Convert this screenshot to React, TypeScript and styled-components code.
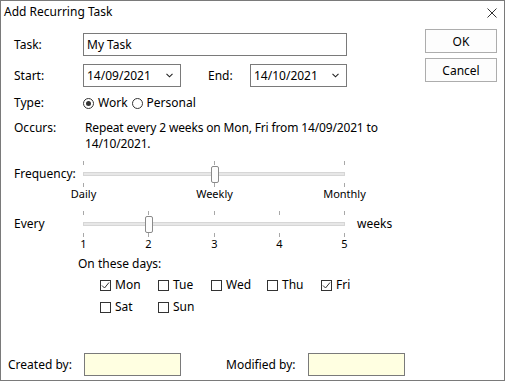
import * as React from 'react';
import styled, {createGlobalStyle} from 'styled-components';

const GlobalStyle = createGlobalStyle`
	html, body {
		margin: 0;
		padding: 0;
		background: #fff;
	}
	body {
		font-family: "Noto Sans", "Open Sans", sans-serif;
		font-size: 12px;
		color: #000;
	}
`;

const TRACK_WIDTH = 262;

const Window = styled.div`
	box-sizing: border-box;
	width: 505px;
	height: 381px;
	border: 1px solid #7a7a7a;
	display: flex;
	flex-direction: column;
	background: #fff;
`;
const TitleBar = styled.div`
	height: 21px;
	display: flex;
	align-items: center;
	justify-content: space-between;
	padding: 0 7px 0 3px;
	font-size: 12px;
`;
const CloseIcon = styled.svg`
	display: block;
	margin-top: 2px;
`;
const Content = styled.div`
	flex: 1;
	display: flex;
`;
const Main = styled.div`
	flex: 1;
	display: flex;
	flex-direction: column;
	padding-left: 13px;
`;
const Row = styled.div<{$top: number; $height?: number}>`
	display: flex;
	align-items: center;
	margin-top: ${p => p.$top}px;
	height: ${p => (p.$height ? `${p.$height}px` : 'auto')};
`;
const TopRow = styled(Row)`
	align-items: flex-start;
`;
const Label = styled.span<{$width: number}>`
	flex: none;
	width: ${p => p.$width}px;
	line-height: 16px;
	white-space: nowrap;
`;
const TextBox = styled.div<{$width: number; $yellow?: boolean}>`
	box-sizing: border-box;
	width: ${p => p.$width}px;
	height: 23px;
	border: 1px solid #7a7a7a;
	background: ${p => (p.$yellow ? '#ffffe1' : '#fff')};
	display: flex;
	align-items: center;
	padding-left: 3px;
	font-size: 12px;
`;
const Select = styled(TextBox)`
	justify-content: space-between;
	padding-right: 7px;
`;
const RadioGroup = styled.div`
	display: flex;
	align-items: center;
	gap: 4px;
`;
const Choice = styled.label`
	display: flex;
	align-items: center;
	gap: 4px;
	line-height: 16px;
`;
const RadioCircle = styled.span<{$checked?: boolean}>`
	box-sizing: border-box;
	width: 11px;
	height: 11px;
	border-radius: 50%;
	border: 1px solid #333;
	display: flex;
	align-items: center;
	justify-content: center;
	&::after {
		content: '';
		width: 5px;
		height: 5px;
		border-radius: 50%;
		background: ${p => (p.$checked ? '#333' : 'transparent')};
	}
`;
const OccursText = styled.div`
	width: 300px;
	line-height: 16px;
	padding-left: 2px;
	letter-spacing: -0.15px;
`;
const SliderBox = styled.div`
	display: flex;
	flex-direction: column;
	width: ${TRACK_WIDTH}px;
`;
const TrackArea = styled.div`
	position: relative;
	height: 26px;
`;
const Groove = styled.div`
	position: absolute;
	left: 0;
	right: 0;
	top: 11px;
	height: 4px;
	box-sizing: border-box;
	background: #e7e7e7;
	border: 1px solid #d6d6d6;
`;
const Tick = styled.div<{$bottom?: boolean}>`
	position: absolute;
	width: 1px;
	height: 4px;
	background: #a8a8a8;
	top: ${p => (p.$bottom ? '22px' : '0')};
`;
const Thumb = styled.div`
	position: absolute;
	top: 5px;
	width: 8px;
	height: 17px;
	box-sizing: border-box;
	margin-left: -4px;
	border: 1px solid #8a8a8a;
	border-radius: 2px;
	background: #fdfdfd;
`;
const TickLabels = styled.div`
	position: relative;
	height: 14px;
	line-height: 14px;
	font-size: 11px;
`;
const TickLabel = styled.span`
	position: absolute;
	top: 0;
	transform: translateX(-50%);
	white-space: nowrap;
`;
const SliderRow = styled.div<{$top: number}>`
	display: flex;
	align-items: flex-start;
	margin-top: ${p => p.$top}px;
`;
const SliderSide = styled.span<{$width: number; $pad?: number}>`
	flex: none;
	width: ${p => p.$width}px;
	padding-left: ${p => p.$pad || 0}px;
	height: 26px;
	line-height: 26px;
`;
const DaysTitle = styled.div`
	margin-top: 6px;
	padding-left: 64px;
	line-height: 14px;
`;
const DaysGrid = styled.div`
	display: grid;
	grid-template-columns: 58px 53px 56px 54px 60px;
	grid-auto-rows: 14px;
	row-gap: 8px;
	margin-top: 7px;
	padding-left: 86px;
`;
const CheckLabel = styled.label`
	display: flex;
	align-items: center;
	gap: 4px;
	height: 14px;
	line-height: 14px;
`;
const CheckBox = styled.span`
	box-sizing: border-box;
	width: 11px;
	height: 11px;
	border: 1px solid #333;
	background: #fff;
	display: flex;
	align-items: center;
	justify-content: center;
`;
const Buttons = styled.div`
	width: 72px;
	margin: 7px 7px 0 0;
	display: flex;
	flex-direction: column;
	gap: 5px;
`;
const Button = styled.div`
	box-sizing: border-box;
	height: 24px;
	border: 1px solid #adadad;
	background: #fdfdfd;
	display: flex;
	align-items: center;
	justify-content: center;
`;
const Footer = styled.div`
	display: flex;
	align-items: center;
	height: 23px;
	padding-left: 7px;
	margin-bottom: 4px;
`;

const Chevron = () => (
	<svg width="7" height="5" viewBox="0 0 7 5">
		<polyline points="0.5,0.8 3.5,3.8 6.5,0.8" fill="none" stroke="#222" strokeWidth="1.1" />
	</svg>
);

const Radio: React.FC<{label: string; checked?: boolean}> = ({label, checked}) => (
	<Choice>
		<RadioCircle $checked={checked} />
		{label}
	</Choice>
);

const Check: React.FC<{label: string; checked?: boolean}> = ({label, checked}) => (
	<CheckLabel>
		<CheckBox>
			{checked && (
				<svg width="9" height="9" viewBox="0 0 9 9">
					<polyline points="1,4.5 3.5,7 8,1.5" fill="none" stroke="#333" strokeWidth="1" />
				</svg>
			)}
		</CheckBox>
		{label}
	</CheckLabel>
);

const Slider: React.FC<{labels: string[]; value: number}> = ({labels, value}) => {
	const step = (TRACK_WIDTH - 1) / (labels.length - 1);
	return (
		<SliderBox>
			<TrackArea>
				<Groove />
				{labels.map((l, i) => (
					<React.Fragment key={l}>
						<Tick style={{left: Math.round(i * step)}} />
						<Tick $bottom style={{left: Math.round(i * step)}} />
					</React.Fragment>
				))}
				<Thumb style={{left: Math.round(value * step) + 0.5}} />
			</TrackArea>
			<TickLabels>
				{labels.map((l, i) => (
					<TickLabel key={l} style={{left: Math.round(i * step) + 0.5}}>{l}</TickLabel>
				))}
			</TickLabels>
		</SliderBox>
	);
};

const days = [
	{name: 'Mon', on: true},
	{name: 'Tue', on: false},
	{name: 'Wed', on: false},
	{name: 'Thu', on: false},
	{name: 'Fri', on: true},
];

export default function App() {
	return (
		<>
			<GlobalStyle />
			<Window>
				<TitleBar>
					<span>Add Recurring Task</span>
					<CloseIcon width="10" height="10" viewBox="0 0 10 10">
						<path d="M0.5 0.5 L9.5 9.5 M9.5 0.5 L0.5 9.5" stroke="#333" strokeWidth="1" />
					</CloseIcon>
				</TitleBar>
				<Content>
					<Main>
						<Row $top={11} $height={23}>
							<Label $width={69}>Task:</Label>
							<TextBox $width={264}>My Task</TextBox>
						</Row>
						<Row $top={8} $height={23}>
							<Label $width={69}>Start:</Label>
							<Select $width={98}>14/09/2021<Chevron /></Select>
							<Label $width={69} style={{paddingLeft: 27, width: 42}}>End:</Label>
							<Select $width={97}>14/10/2021<Chevron /></Select>
						</Row>
						<Row $top={7} $height={18}>
							<Label $width={69}>Type:</Label>
							<RadioGroup>
								<Radio label="Work" checked />
								<Radio label="Personal" />
							</RadioGroup>
						</Row>
						<TopRow $top={8}>
							<Label $width={69}>Occurs:</Label>
							<OccursText>Repeat every 2 weeks on Mon, Fri from 14/09/2021 to 14/10/2021.</OccursText>
						</TopRow>
						<SliderRow $top={9}>
							<SliderSide $width={69}>Frequency:</SliderSide>
							<Slider labels={['Daily', 'Weekly', 'Monthly']} value={1} />
						</SliderRow>
						<SliderRow $top={10}>
							<SliderSide $width={69}>Every</SliderSide>
							<Slider labels={['1', '2', '3', '4', '5']} value={1} />
							<SliderSide $width={50} $pad={12}>weeks</SliderSide>
						</SliderRow>
						<DaysTitle>On these days:</DaysTitle>
						<DaysGrid>
							{days.map(d => <Check key={d.name} label={d.name} checked={d.on} />)}
							<Check label="Sat" />
							<Check label="Sun" />
						</DaysGrid>
					</Main>
					<Buttons>
						<Button>OK</Button>
						<Button>Cancel</Button>
					</Buttons>
				</Content>
				<Footer>
					<Label $width={76}>Created by:</Label>
					<TextBox $width={97} $yellow />
					<Label $width={82} style={{marginLeft: 45}}>Modified by:</Label>
					<TextBox $width={97} $yellow />
				</Footer>
			</Window>
		</>
	);
}
